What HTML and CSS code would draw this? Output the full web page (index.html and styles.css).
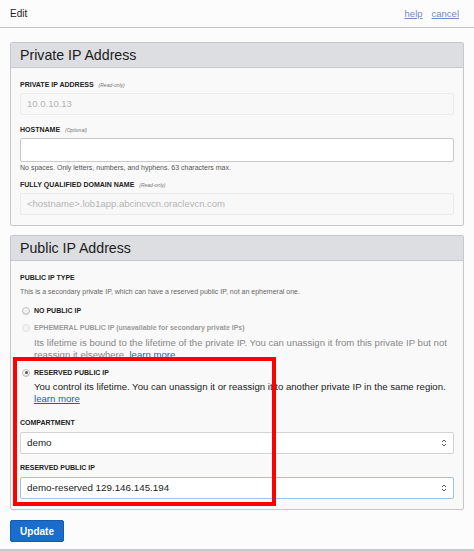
FILE: index.html
```html
<!DOCTYPE html>
<html>
<head>
<meta charset="utf-8">
<link rel="stylesheet" href="styles.css">
</head>
<body>
<div class="page">
  <header class="topbar">
    <span class="title">Edit</span>
    <nav class="links"><a href="#">help</a><a href="#">cancel</a></nav>
  </header>
  <main class="content">
    <section class="panel">
      <h2 class="panel-head">Private IP Address</h2>
      <div class="panel-body">
        <div class="field">
          <div class="label">PRIVATE IP ADDRESS <em>(Read-only)</em></div>
          <div class="input readonly">10.0.10.13</div>
        </div>
        <div class="field">
          <div class="label">HOSTNAME <em>(Optional)</em></div>
          <div class="input tall"></div>
          <div class="help">No spaces. Only letters, numbers, and hyphens. 63 characters max.</div>
        </div>
        <div class="field">
          <div class="label">FULLY QUALIFIED DOMAIN NAME <em>(Read-only)</em></div>
          <div class="input readonly">&lt;hostname&gt;.lob1app.abcincvcn.oraclevcn.com</div>
        </div>
      </div>
    </section>
    <section class="panel">
      <h2 class="panel-head">Public IP Address</h2>
      <div class="panel-body">
        <div class="label">PUBLIC IP TYPE</div>
        <div class="desc">This is a secondary private IP, which can have a reserved public IP, not an ephemeral one.</div>
        <div class="radio-row first"><span class="radio"></span><span class="rlabel">NO PUBLIC IP</span></div>
        <div class="radio-row disabled"><span class="radio"></span><span class="rlabel">EPHEMERAL PUBLIC IP <span class="note">(unavailable for secondary private IPs)</span></span></div>
        <p class="rdesc disabled">Its lifetime is bound to the lifetime of the private IP. You can unassign it from this private IP but not reassign it elsewhere. <a href="#" class="plain">learn more</a></p>
        <div class="radio-row"><span class="radio checked"></span><span class="rlabel">RESERVED PUBLIC IP</span></div>
        <p class="rdesc">You control its lifetime. You can unassign it or reassign it to another private IP in the same region. <a href="#">learn more</a></p>
        <div class="field sel">
          <div class="label">COMPARTMENT</div>
          <div class="input select"><span>demo</span>
            <svg width="6" height="10" viewBox="0 0 6 10"><path d="M1 4 L3 2 L5 4 M1 6 L3 8 L5 6" fill="none" stroke="#555" stroke-width="1"/></svg>
          </div>
        </div>
        <div class="field sel">
          <div class="label">RESERVED PUBLIC IP</div>
          <div class="input select focus"><span>demo-reserved 129.146.145.194</span>
            <svg width="6" height="10" viewBox="0 0 6 10"><path d="M1 4 L3 2 L5 4 M1 6 L3 8 L5 6" fill="none" stroke="#555" stroke-width="1"/></svg>
          </div>
        </div>
      </div>
    </section>
    <div class="actions"><button class="btn">Update</button></div>
  </main>
  <div class="annot"></div>
</div>
</body>
</html>
```
FILE: styles.css
```css
* { box-sizing: border-box; }
html, body { margin: 0; padding: 0; }
body {
  font-family: "Liberation Sans", Arial, sans-serif;
  color: #222;
  background: #fcfcfc;
}
.page {
  position: relative;
  height: 551px;
  border-bottom: 2px solid #c8cbce;
  background: #fcfcfc;
}
.topbar {
  height: 28px;
  display: flex;
  align-items: center;
  justify-content: space-between;
  padding: 0 15px 1px 10px;
  border-bottom: 1px solid #c4c7ca;
  background: #fcfcfc;
}
.topbar .title { font-size: 10px; color: #222; }
.links { display: flex; gap: 9px; }
.links a { font-size: 9.5px; color: #7488cc; text-decoration: underline; }
.content { padding: 14px 10px 0 10px; }
.panel {
  border: 1px solid #c6c9cc;
  border-radius: 2px;
  background: #f9f9f9;
  margin-bottom: 9px;
}
.panel-head {
  margin: 0;
  height: 25px;
  background: #dcdee1;
  border-bottom: 1px solid #c6c9cc;
  font-size: 14.2px;
  font-weight: normal;
  color: #1c1c1c;
  padding: 4px 0 0 9px;
  line-height: 17px;
}
.panel-body { padding: 12px 9px 10px 9px; }
.field { margin-bottom: 10px; }
.field:last-child { margin-bottom: 0; }
.field.with-help { margin-bottom: 8px; }
.label {
  font-size: 7px;
  font-weight: bold;
  color: #222;
  line-height: 10px;
  margin-bottom: 3px;
}
.label em { font-weight: normal; font-size: 5px; color: #777; margin-left: 3px; }
.input {
  height: 22px;
  border: 1px solid #e6e6e6;
  border-radius: 2px;
  background: #fafafa;
  font-size: 9.5px;
  line-height: 20px;
  padding: 0 6px;
  color: #222;
}
.input.readonly { color: #b4b4b4; background: #f8f8f8; border-color: #ececec; }
.input.tall { height: 24px; background: #fff; border-color: #c9c9c9; }
.help { font-size: 7px; color: #555; line-height: 8px; margin-top: 2px; margin-bottom: -2px; }
.desc { font-size: 7px; color: #666; line-height: 10px; margin-top: 4px; }
.radio-row { display: flex; align-items: center; height: 17px; }
.radio-row.first { margin-top: 5px; }
.radio {
  width: 8px; height: 8px; border-radius: 50%;
  border: 1px solid #bdbdbd;
  background: linear-gradient(#fff, #e4e4e4);
  margin: 0 4px 0 2px;
  position: relative;
}
.radio.checked::after {
  content: ""; position: absolute; left: 1.5px; top: 1.5px;
  width: 3px; height: 3px; border-radius: 50%; background: #555;
}
.disabled .radio { border-color: #e0e0e0; background: #f3f3f3; }
.rlabel { font-size: 7px; font-weight: bold; color: #222; }
.disabled .rlabel { font-weight: bold; color: #999; }
.rdesc {
  margin: 0 0 3px 14px;
  font-size: 9.6px;
  line-height: 12px;
  color: #222;
}
.rdesc.disabled { color: #888; margin-top: 1px; }
.rdesc a { color: #1a5fbf; }
.rdesc a.plain { text-decoration: none; color: #1a5fbf; }
.field.sel { margin-top: 13px; margin-bottom: 0; }
.field.sel .label { margin-bottom: 4px; }
.field.sel + .field.sel { margin-top: 9px; }
.input.select {
  display: flex; align-items: center; justify-content: space-between;
  background: #fff; border-color: #d2d2d2; font-size: 9.8px; padding: 0 6px 0 6px;
}
.input.select.focus { border-color: #9cc3ea; }
.actions { padding-top: 1px; }
.btn {
  width: 54px; height: 22px;
  background: #1a6dcc;
  border: 1px solid #155ab0;
  border-radius: 2px;
  color: #fff;
  font-family: "Liberation Sans", Arial, sans-serif;
  font-weight: bold;
  font-size: 10px;
  padding: 0;
}
.annot {
  position: absolute;
  left: 13px; top: 357px;
  width: 263px; height: 149px;
  border: 4px solid #ff0000;
  pointer-events: none;
}
```
